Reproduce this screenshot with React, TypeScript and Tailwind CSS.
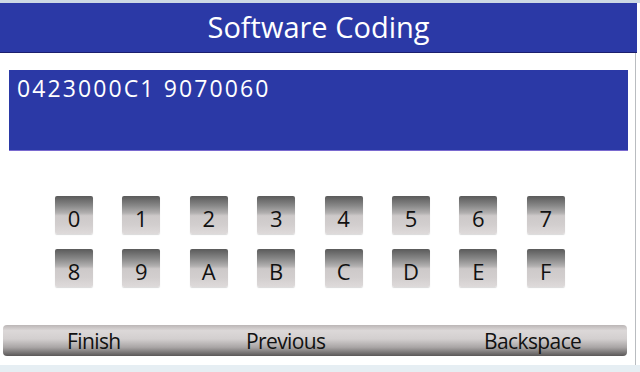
const keys = ["0", "1", "2", "3", "4", "5", "6", "7", "8", "9", "A", "B", "C", "D", "E", "F"];

function Key({ label }: { label: string }) {
  return (
    <div className="w-[38px] h-[38px] rounded-[2px] flex items-center justify-center pt-[6px] text-[22px] text-[#111] bg-[linear-gradient(to_bottom,#5a5a5a_0%,#878787_25%,#b2b0b0_45%,#cdc9c9_52%,#d2cece_75%,#dedada_100%)] shadow-[0_1px_1px_rgba(0,0,0,0.15)]">
      {label}
    </div>
  );
}

export default function App() {
  return (
    <div className="w-[640px] h-[372px] bg-white overflow-hidden flex flex-col font-['Open_Sans',sans-serif]">
      <div className="h-[3px] bg-[#cdd9e4]" />
      <div className="h-[50px] w-[637px] bg-[#2b39a6] border-b border-[#1c1f6e] flex items-center justify-center pb-[3px]">
        <span className="text-white text-[29px] leading-none">Software Coding</span>
      </div>
      <div className="w-[636px] flex-1 border-r border-[#b9bcc0] flex flex-col">
        <div className="ml-[9px] mt-[17px] w-[619px] h-[81px] bg-[#2b39a6] border-b border-[#7a6ad0] px-[8px] pt-[1px]">
          <span className="text-white text-[23px] tracking-[2.1px]">0423000C1 9070060</span>
        </div>
        <div className="ml-[55px] mt-[45px] grid grid-cols-[repeat(8,38px)] gap-x-[29.4px] gap-y-[15px]">
          {keys.map((k) => (
            <Key key={k} label={k} />
          ))}
        </div>
        <div className="ml-[3px] mt-[38px] w-[624px] h-[31px] rounded-[4px] flex items-center pt-[3px] text-[21px] tracking-[-0.6px] text-[#111] bg-[linear-gradient(to_bottom,#bbb6b6_0%,#dcd8d8_18%,#d3cfcf_45%,#a9a5a5_72%,#5a5757_100%)]">
          <div className="w-[243px] pl-[64px]">Finish</div>
          <div className="w-[238px]">Previous</div>
          <div>Backspace</div>
        </div>
      </div>
      <div className="h-[7px] bg-[#e6eef3]" />
    </div>
  );
}
